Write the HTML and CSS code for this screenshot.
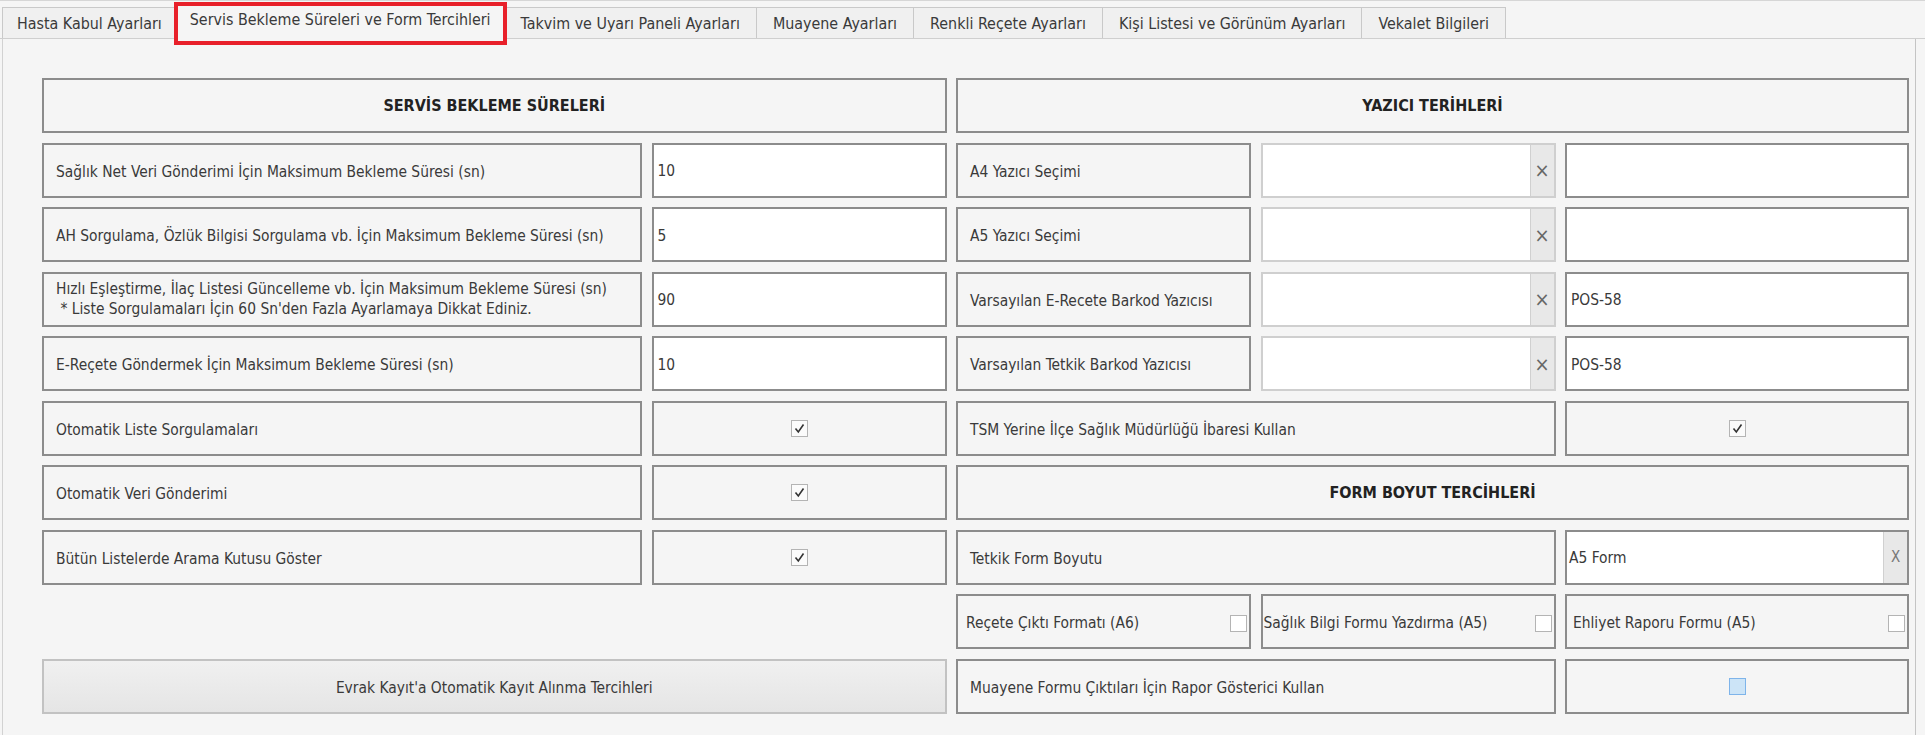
FILE: index.html
```html
<!DOCTYPE html>
<html lang="tr">
<head>
    <meta charset="UTF-8">
    <meta name="viewport" content="width=device-width, initial-scale=1.0">
    <title>Servis Bekleme Süreleri ve Form Tercihleri</title>
    <link rel="stylesheet" href="styles.css">
</head>
<body>
    <div class="tabs">
        <div class="tab">Hasta Kabul Ayarları</div>
        <div class="tab active">Servis Bekleme Süreleri ve Form Tercihleri</div>
        <div class="tab">Takvim ve Uyarı Paneli Ayarları</div>
        <div class="tab">Muayene Ayarları</div>
        <div class="tab">Renkli Reçete Ayarları</div>
        <div class="tab">Kişi Listesi ve Görünüm Ayarları</div>
        <div class="tab">Vekalet Bilgileri</div>
    </div>

    <div class="page">
        <div class="grid">
            <div class="box head span-left">SERVİS BEKLEME SÜRELERİ</div>
            <div class="box head span-right">YAZICI TERİHLERİ</div>

            <div class="box label">Sağlık Net Veri Gönderimi İçin Maksimum Bekleme Süresi (sn)</div>
            <div class="field">10</div>
            <div class="box label">A4 Yazıcı Seçimi</div>
            <div class="combo"><span class="combo-text"></span><span class="clear">×</span></div>
            <div class="field"></div>

            <div class="box label">AH Sorgulama, Özlük Bilgisi Sorgulama vb. İçin Maksimum Bekleme Süresi (sn)</div>
            <div class="field">5</div>
            <div class="box label">A5 Yazıcı Seçimi</div>
            <div class="combo"><span class="combo-text"></span><span class="clear">×</span></div>
            <div class="field"></div>

            <div class="box label two-line">Hızlı Eşleştirme, İlaç Listesi Güncelleme vb. İçin Maksimum Bekleme Süresi (sn)<br>&nbsp;* Liste Sorgulamaları İçin 60 Sn'den Fazla Ayarlamaya Dikkat Ediniz.</div>
            <div class="field">90</div>
            <div class="box label">Varsayılan E-Recete Barkod Yazıcısı</div>
            <div class="combo"><span class="combo-text"></span><span class="clear">×</span></div>
            <div class="field">POS-58</div>

            <div class="box label">E-Reçete Göndermek İçin Maksimum Bekleme Süresi (sn)</div>
            <div class="field">10</div>
            <div class="box label">Varsayılan Tetkik Barkod Yazıcısı</div>
            <div class="combo"><span class="combo-text"></span><span class="clear">×</span></div>
            <div class="field">POS-58</div>

            <div class="box label">Otomatik Liste Sorgulamaları</div>
            <div class="box center"><span class="check checked"></span></div>
            <div class="box label span-two">TSM Yerine İlçe Sağlık Müdürlüğü İbaresi Kullan</div>
            <div class="box center"><span class="check checked"></span></div>

            <div class="box label">Otomatik Veri Gönderimi</div>
            <div class="box center"><span class="check checked"></span></div>
            <div class="box head span-right">FORM BOYUT TERCİHLERİ</div>

            <div class="box label">Bütün Listelerde Arama Kutusu Göster</div>
            <div class="box center"><span class="check checked"></span></div>
            <div class="box label span-two">Tetkik Form Boyutu</div>
            <div class="combo dark"><span class="combo-text">A5 Form</span><span class="clear letter">X</span></div>

            <div class="box option first-option">Reçete Çıktı Formatı (A6)<span class="check"></span></div>
            <div class="box option tight">Sağlık Bilgi Formu Yazdırma (A5)<span class="check"></span></div>
            <div class="box option">Ehliyet Raporu Formu (A5)<span class="check"></span></div>

            <div class="button span-left">Evrak Kayıt'a Otomatik Kayıt Alınma Tercihleri</div>
            <div class="box label span-two">Muayene Formu Çıktıları İçin Rapor Gösterici Kullan</div>
            <div class="box center"><span class="check focus"></span></div>
        </div>
    </div>
</body>
</html>
```

FILE: styles.css
```css
body {
    margin: 0;
    font-family: "DejaVu Sans Condensed", "Liberation Sans", sans-serif;
    font-size: 15.4px;
    color: #3a3a3a;
    background-color: #f5f5f5;
    border-top: 1px solid #d6d6d6;
    overflow: hidden;
    height: 100vh;
    box-sizing: border-box;
}

.tabs {
    display: flex;
    align-items: flex-end;
    height: 36px;
    padding-left: 2px;
    margin-top: 1px;
    border-bottom: 1px solid #cfcfcf;
}

.tab {
    height: 31px;
    padding: 0 16px;
    display: flex;
    align-items: center;
    background-color: #f0f0f0;
    border: 1px solid #c9c9c9;
    border-bottom: none;
    margin-right: -1px;
    box-sizing: border-box;
    white-space: nowrap;
    font-size: 15.9px;
}

.tab:first-child {
    padding: 0 14px;
}

.tab.active {
    position: relative;
    height: 36px;
    padding: 0 13px 4px;
    background-color: #f5f5f5;
    margin-bottom: -1px;
    z-index: 1;
}

.tab.active::after {
    content: "";
    position: absolute;
    left: -3px;
    right: -3px;
    top: -2px;
    bottom: -6px;
    border: 4px solid #e8202a;
}

.page {
    margin: 0 9px 0 2px;
    height: calc(100% - 38px);
    box-sizing: border-box;
    border-left: 1px solid #d2d2d2;
    border-right: 1px solid #c4c4c4;
    padding: 39px 0 0 39px;
}

.grid {
    display: grid;
    grid-template-columns: 600px 295px 295px 295px 344px;
    grid-auto-rows: 55px;
    column-gap: 9.5px;
    row-gap: 9.5px;
}

.span-left {
    grid-column: span 2;
}

.span-right {
    grid-column: span 3;
}

.span-two {
    grid-column: span 2;
}

.box {
    box-sizing: border-box;
    border: 2px solid #8c8c8c;
    background-color: #f5f5f5;
    display: flex;
    align-items: center;
}

.head {
    justify-content: center;
    font-weight: bold;
    font-size: 16px;
    color: #222;
}

.label {
    padding: 3px 12px 0;
    white-space: nowrap;
}

.two-line {
    line-height: 20px;
    padding-top: 0;
}

.center {
    justify-content: center;
}

.field {
    box-sizing: border-box;
    border: 2px solid #8c8c8c;
    background-color: #fff;
    display: flex;
    align-items: center;
    padding: 2px 4px 0;
}

.combo {
    box-sizing: border-box;
    border: 2px solid #cfcfcf;
    background-color: #fff;
    display: flex;
}

.combo.dark {
    border-color: #8c8c8c;
}

.combo-text {
    flex: 1;
    display: flex;
    align-items: center;
    padding: 2px 2px 0;
}

.clear {
    width: 23px;
    display: flex;
    align-items: center;
    justify-content: center;
    background-color: #e8e8e8;
    border-left: 1px solid #d0d0d0;
    color: #666;
    font-size: 20px;
}

.clear.letter {
    font-size: 15px;
    color: #777;
}

.option {
    justify-content: space-between;
    padding: 3px 2px 0 6px;
}

.option.tight {
    padding-left: 1px;
}

.first-option {
    grid-column: 3;
    padding-left: 8px;
}

.check {
    width: 17px;
    height: 17px;
    box-sizing: border-box;
    border: 1px solid #b4b4b4;
    background-color: #fff;
    display: inline-block;
}

.check.checked {
    background: #fbfbfb url("data:image/svg+xml;utf8,<svg xmlns='http://www.w3.org/2000/svg' width='15' height='15'><path d='M3.5 7.5 L6.3 11 L11.5 3.5' fill='none' stroke='%23333' stroke-width='1.6'/></svg>") no-repeat center;
}

.check.focus {
    background-color: #cce4f7;
    border-color: #7eb4ea;
}

.button {
    box-sizing: border-box;
    border: 2px solid #c2c2c2;
    background: linear-gradient(#f0f0f0, #e5e5e5);
    display: flex;
    align-items: center;
    justify-content: center;
    padding-top: 3px;
}
```
